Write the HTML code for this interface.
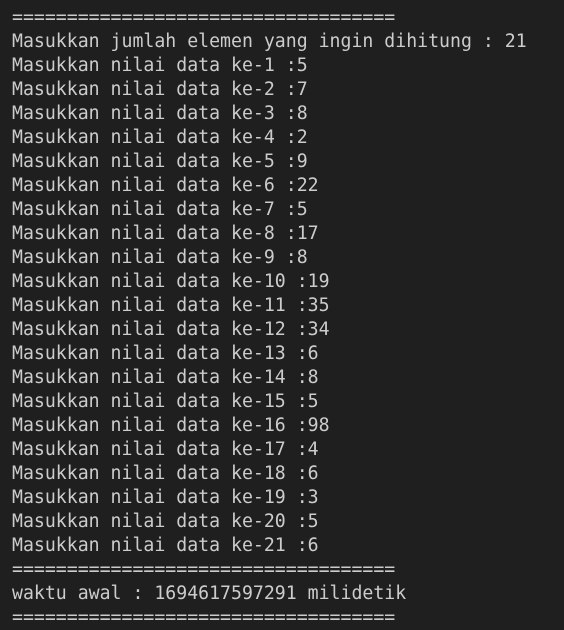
<!DOCTYPE html><html><head><style>
body{margin:0;background:#1f1f1f;width:564px;height:630px;overflow:hidden}
pre{margin:0;position:absolute;left:12px;top:6px;font-family:"DejaVu Sans Mono","Liberation Mono",monospace;font-size:18.2px;line-height:24px;color:#cccccc}
</style></head><body><pre>===================================
Masukkan jumlah elemen yang ingin dihitung : 21
Masukkan nilai data ke-1 :5
Masukkan nilai data ke-2 :7
Masukkan nilai data ke-3 :8
Masukkan nilai data ke-4 :2
Masukkan nilai data ke-5 :9
Masukkan nilai data ke-6 :22
Masukkan nilai data ke-7 :5
Masukkan nilai data ke-8 :17
Masukkan nilai data ke-9 :8
Masukkan nilai data ke-10 :19
Masukkan nilai data ke-11 :35
Masukkan nilai data ke-12 :34
Masukkan nilai data ke-13 :6
Masukkan nilai data ke-14 :8
Masukkan nilai data ke-15 :5
Masukkan nilai data ke-16 :98
Masukkan nilai data ke-17 :4
Masukkan nilai data ke-18 :6
Masukkan nilai data ke-19 :3
Masukkan nilai data ke-20 :5
Masukkan nilai data ke-21 :6
===================================
waktu awal : 1694617597291 milidetik
===================================</pre></body></html>
